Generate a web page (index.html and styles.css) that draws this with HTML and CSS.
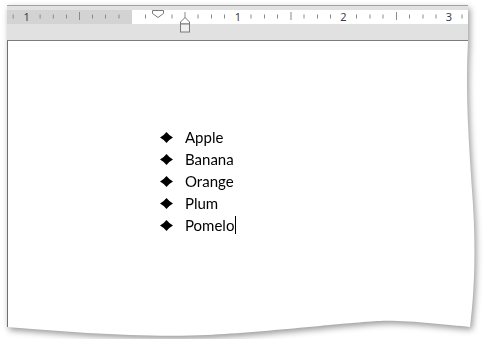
FILE: index.html
```html
<!DOCTYPE html>
<html>
<head>
<meta charset="utf-8">
<link rel="stylesheet" href="styles.css">
</head>
<body>
<div class="frame">
  <div class="sheet">
    <div class="header">
      <svg class="ruler" width="470" height="36" viewBox="0 0 470 36">
        <rect x="0" y="0" width="470" height="36" fill="#e1e1e1"/>
        <rect x="0" y="0" width="470" height="1" fill="#a3a3a3"/>
        <rect x="0" y="5" width="125" height="14" fill="#d3d3d3"/>
        <rect x="125" y="5" width="345" height="14" fill="#ffffff"/>
        <g stroke="#8a8a8a" stroke-width="1">
          <line x1="6.2" y1="9.5" x2="6.2" y2="13.5"/>
          <line x1="33.1" y1="9.5" x2="33.1" y2="13.5"/>
          <line x1="46.3" y1="9.5" x2="46.3" y2="13.5"/>
          <line x1="59.5" y1="9.5" x2="59.5" y2="13.5"/>
          <line x1="72.5" y1="7" x2="72.5" y2="15"/>
          <line x1="85.5" y1="9.5" x2="85.5" y2="13.5"/>
          <line x1="98.5" y1="9.5" x2="98.5" y2="13.5"/>
          <line x1="112" y1="9.5" x2="112" y2="13.5"/>
          <line x1="138.5" y1="9.5" x2="138.5" y2="13.5"/>
          <line x1="165" y1="9.5" x2="165" y2="13.5"/>
          <line x1="178" y1="7" x2="178" y2="15"/>
          <line x1="191" y1="9.5" x2="191" y2="13.5"/>
          <line x1="204.5" y1="9.5" x2="204.5" y2="13.5"/>
          <line x1="217.5" y1="9.5" x2="217.5" y2="13.5"/>
          <line x1="244" y1="9.5" x2="244" y2="13.5"/>
          <line x1="257.5" y1="9.5" x2="257.5" y2="13.5"/>
          <line x1="270.5" y1="9.5" x2="270.5" y2="13.5"/>
          <line x1="284" y1="7" x2="284" y2="15"/>
          <line x1="297" y1="9.5" x2="297" y2="13.5"/>
          <line x1="310.5" y1="9.5" x2="310.5" y2="13.5"/>
          <line x1="323.5" y1="9.5" x2="323.5" y2="13.5"/>
          <line x1="349.5" y1="9.5" x2="349.5" y2="13.5"/>
          <line x1="363" y1="9.5" x2="363" y2="13.5"/>
          <line x1="376" y1="9.5" x2="376" y2="13.5"/>
          <line x1="389.5" y1="7" x2="389.5" y2="15"/>
          <line x1="402.5" y1="9.5" x2="402.5" y2="13.5"/>
          <line x1="416" y1="9.5" x2="416" y2="13.5"/>
          <line x1="429" y1="9.5" x2="429" y2="13.5"/>
          <line x1="455" y1="9.5" x2="455" y2="13.5"/>
        </g>
        <g class="nums" text-anchor="middle">
          <text x="19.6" y="16">1</text>
          <text x="230.8" y="16">1</text>
          <text x="336.3" y="16">2</text>
          <text x="441.8" y="16">3</text>
        </g>
        <path d="M145.5 5.5 H156.5 V8.5 L151 12.5 L145.5 8.5 Z" fill="#ffffff" stroke="#7a7a7a" stroke-width="1"/>
        <path d="M173.5 19 V17 L178 12.5 L182.5 17 V19 Z" fill="#ffffff" stroke="#7a7a7a" stroke-width="1"/>
        <rect x="173.5" y="19" width="9" height="8" fill="#f0f0f0" stroke="#7a7a7a" stroke-width="1"/>
      </svg>
    </div>
    <div class="page">
      <ul class="list">
        <li class="item"><svg class="bullet" width="13" height="11" viewBox="0 0 13 11"><path d="M6.5 0 Q9 3.3 13 5.5 Q9 7.7 6.5 11 Q4 7.7 0 5.5 Q4 3.3 6.5 0Z" fill="#000"/></svg><span>Apple</span></li>
        <li class="item"><svg class="bullet" width="13" height="11" viewBox="0 0 13 11"><path d="M6.5 0 Q9 3.3 13 5.5 Q9 7.7 6.5 11 Q4 7.7 0 5.5 Q4 3.3 6.5 0Z" fill="#000"/></svg><span>Banana</span></li>
        <li class="item"><svg class="bullet" width="13" height="11" viewBox="0 0 13 11"><path d="M6.5 0 Q9 3.3 13 5.5 Q9 7.7 6.5 11 Q4 7.7 0 5.5 Q4 3.3 6.5 0Z" fill="#000"/></svg><span>Orange</span></li>
        <li class="item"><svg class="bullet" width="13" height="11" viewBox="0 0 13 11"><path d="M6.5 0 Q9 3.3 13 5.5 Q9 7.7 6.5 11 Q4 7.7 0 5.5 Q4 3.3 6.5 0Z" fill="#000"/></svg><span>Plum</span></li>
        <li class="item"><svg class="bullet" width="13" height="11" viewBox="0 0 13 11"><path d="M6.5 0 Q9 3.3 13 5.5 Q9 7.7 6.5 11 Q4 7.7 0 5.5 Q4 3.3 6.5 0Z" fill="#000"/></svg><span>Pomelo</span><span class="caret"></span></li>
      </ul>
    </div>
  </div>
</div>
</body>
</html>
```
FILE: styles.css
```css
html, body {
  margin: 0;
  padding: 0;
  background: #ffffff;
}
.frame {
  margin: 5px 0 0 7px;
  width: 472px;
  height: 334px;
  filter: drop-shadow(2px 3px 3px rgba(0, 0, 0, 0.4));
}
.sheet {
  width: 100%;
  height: 100%;
  background: #ffffff;
  display: flex;
  flex-direction: column;
  clip-path: path('M0 0 H461 V36 C458 90 462 140 466 200 C469 250 467 290 463 322 C440 320 400 315 373 316 C346 317 260 327 200 330 C140 333 60 327 0 322 Z');
}
.header {
  height: 35px;
  border-bottom: 1px solid #7c7c7c;
  overflow: hidden;
}
.ruler {
  display: block;
}
.nums text {
  font-family: "Noto Sans", "DejaVu Sans", sans-serif;
  font-size: 11px;
  fill: #3d3d4a;
}
.page {
  flex: 1;
  border-left: 1px solid #707070;
}
.list {
  list-style: none;
  margin: 0;
  padding: 85px 0 0 151.5px;
  font-family: Lato, "Open Sans", sans-serif;
  font-size: 15px;
  color: #000000;
}
.item {
  display: flex;
  align-items: center;
  height: 22px;
}
.bullet {
  display: block;
  margin-right: 12.5px;
  flex: none;
}
.caret {
  display: inline-block;
  width: 1px;
  height: 18px;
  background: #000000;
  margin-left: 1px;
}
```
